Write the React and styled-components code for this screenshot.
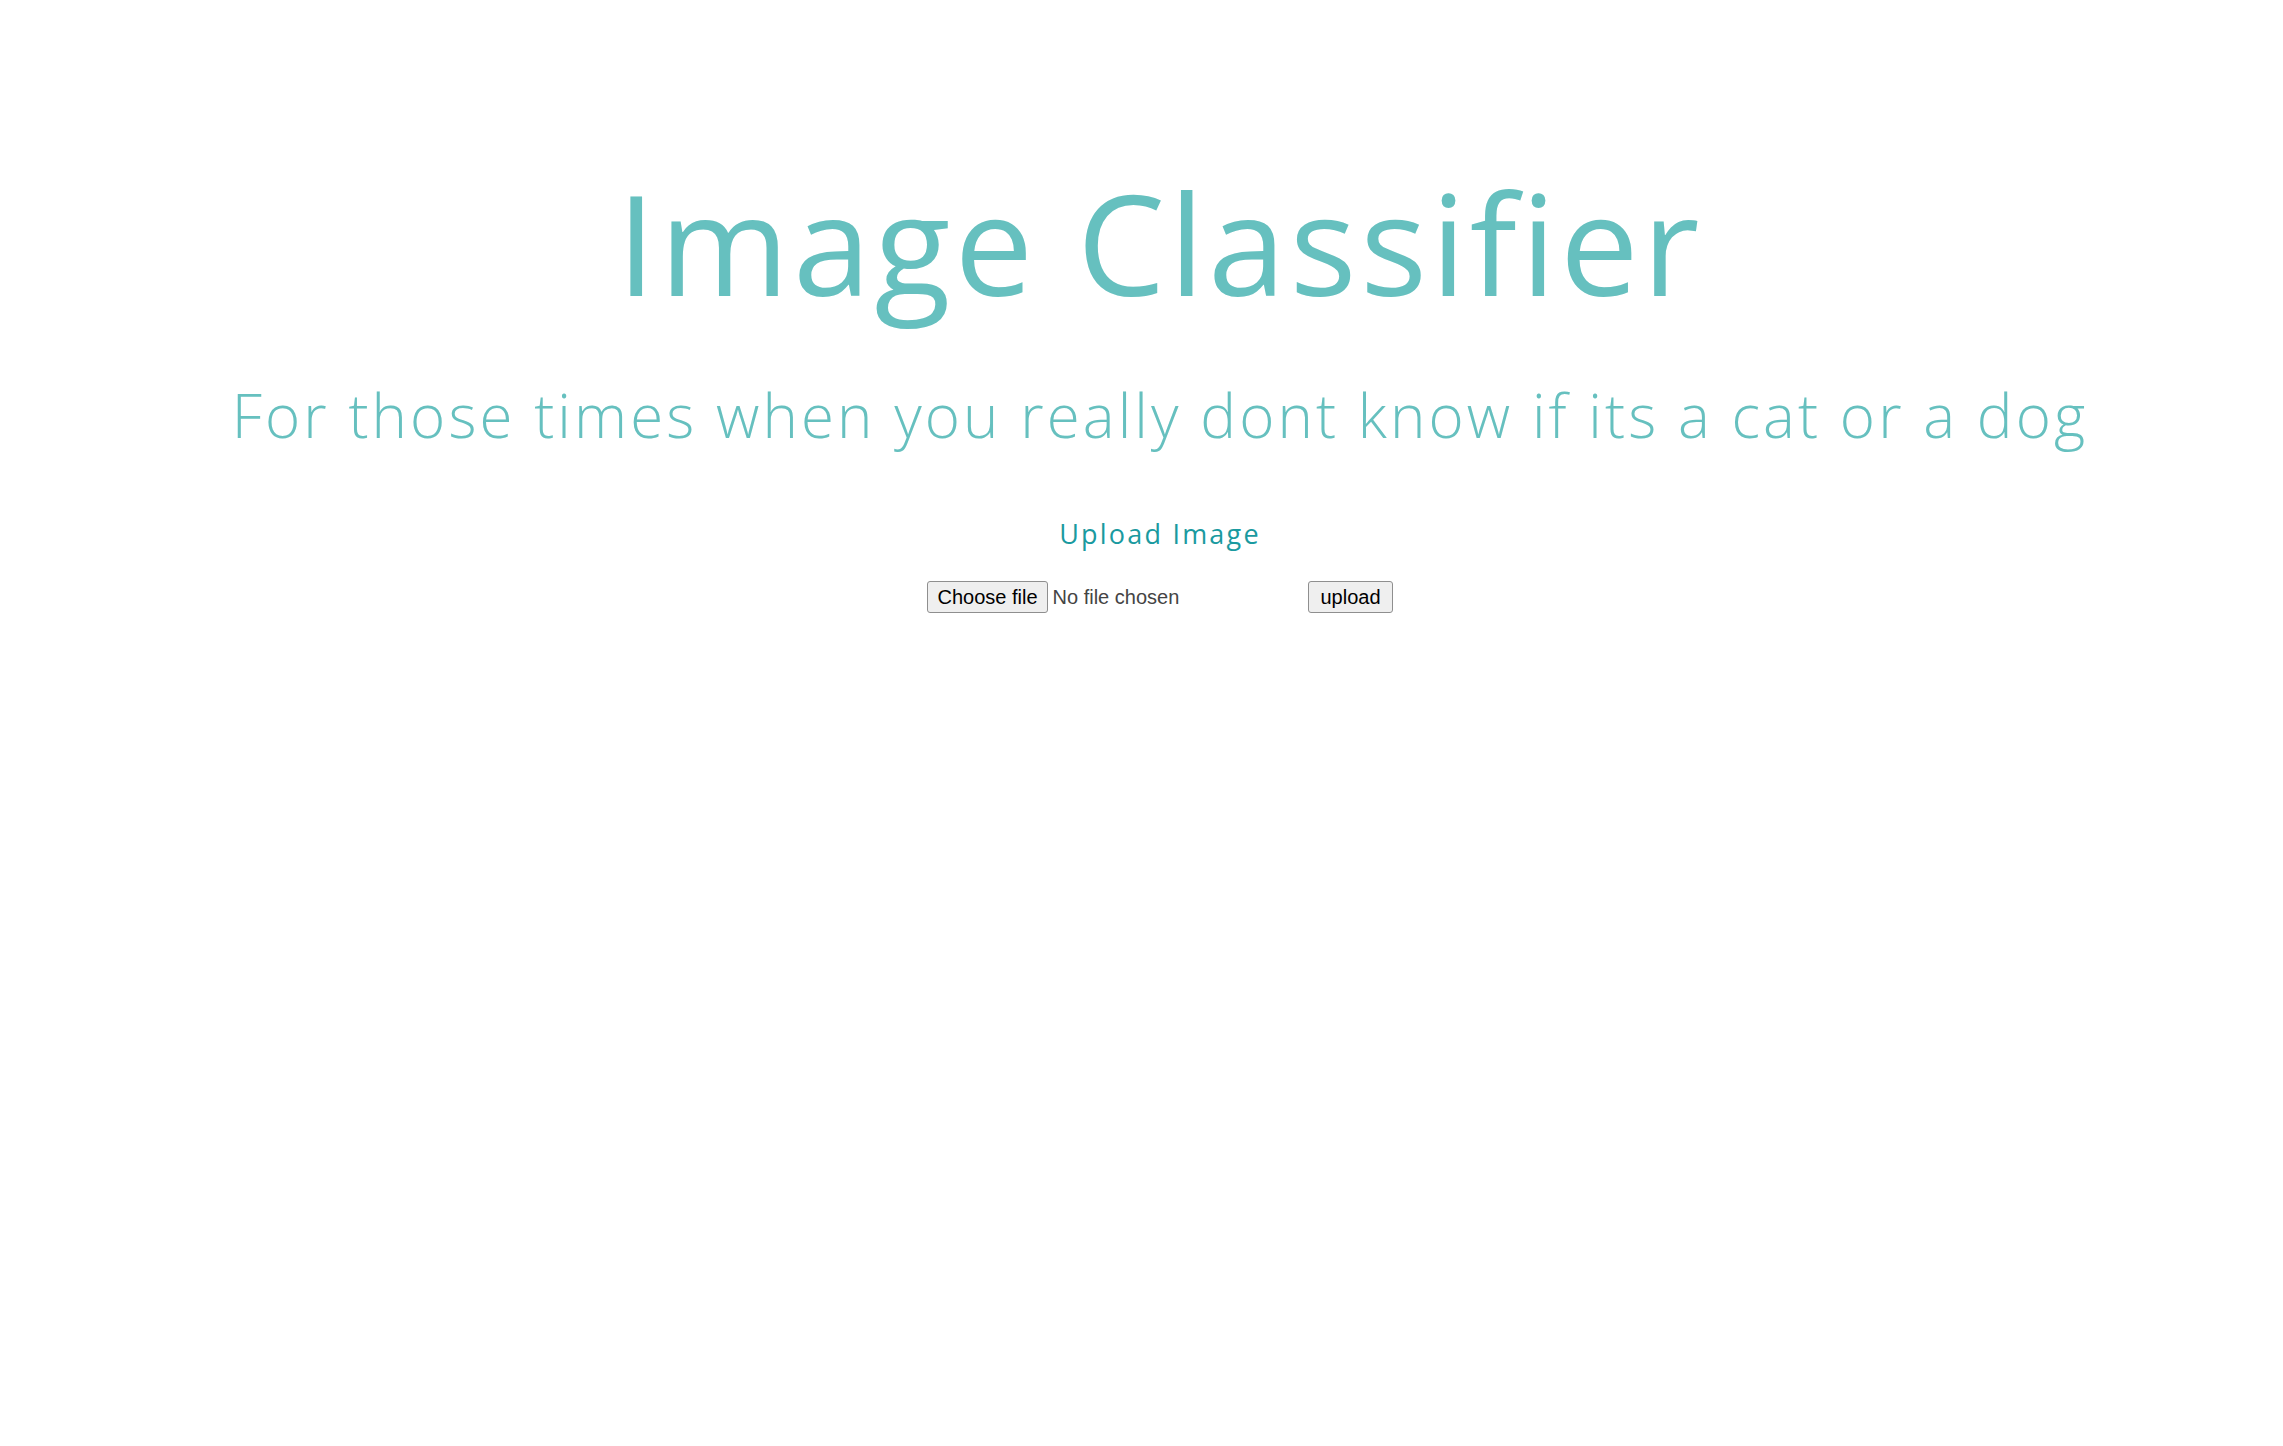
import React, { useState } from 'react'
import styled, { createGlobalStyle } from 'styled-components'

const GlobalStyle = createGlobalStyle`
  html, body {
    margin: 0;
    padding: 0;
    background: #ffffff;
  }
`

const Page = styled.main`
  display: flex;
  flex-direction: column;
  align-items: center;
  min-height: 1446px;
  box-sizing: border-box;
  padding: 172px 0 0 37px;
  font-family: 'Open Sans', sans-serif;
  text-align: center;
`

const Title = styled.h1`
  margin: 0;
  font-size: 140px;
  font-weight: 400;
  line-height: 1;
  letter-spacing: 3.8px;
  color: #66c0bf;
`

const Tagline = styled.h2`
  margin: 73px 0 0;
  font-size: 60px;
  font-weight: 300;
  line-height: 1;
  letter-spacing: 3.1px;
  color: #66c0bf;
`

const UploadForm = styled.form`
  display: flex;
  flex-direction: column;
  align-items: center;
  margin-top: 75px;
`

const UploadLabel = styled.h3`
  margin: 0;
  font-size: 27px;
  font-weight: 500;
  line-height: 1;
  letter-spacing: 2.2px;
  color: #1a9aa0;
`

const Controls = styled.div`
  display: flex;
  align-items: center;
  gap: 5px;
  margin-top: 34px;
`

const FilePicker = styled.label`
  display: flex;
  align-items: center;
  width: 376px;
  cursor: pointer;
`

const HiddenInput = styled.input`
  display: none;
`

const ControlButton = styled.span`
  display: inline-flex;
  align-items: center;
  box-sizing: border-box;
  height: 32px;
  padding: 0 ${({ $pad }) => $pad}px;
  font-family: 'Liberation Sans', Arial, sans-serif;
  font-size: 20px;
  color: #000000;
  background: #efefef;
  border: 1px solid #8f8f8f;
  border-radius: 3px;
`

const FileName = styled.span`
  margin-left: 5px;
  font-family: 'Liberation Sans', Arial, sans-serif;
  font-size: 20px;
  color: #444444;
  white-space: nowrap;
`

const UploadButton = styled.button`
  box-sizing: border-box;
  height: 32px;
  padding: 0 11px;
  font-family: 'Liberation Sans', Arial, sans-serif;
  font-size: 20px;
  color: #000000;
  background: #efefef;
  border: 1px solid #8f8f8f;
  border-radius: 3px;
`

export default function App() {
  const [file, setFile] = useState(null)

  return (
    <>
      <GlobalStyle />
      <Page>
        <Title>Image Classifier</Title>
        <Tagline>For those times when you really dont know if its a cat or a dog</Tagline>
        <UploadForm onSubmit={(e) => e.preventDefault()}>
          <UploadLabel>Upload Image</UploadLabel>
          <Controls>
            <FilePicker>
              <HiddenInput type="file" name="file" onChange={(e) => setFile(e.target.files[0] || null)} />
              <ControlButton $pad={9}>Choose file</ControlButton>
              <FileName>{file ? file.name : 'No file chosen'}</FileName>
            </FilePicker>
            <UploadButton type="submit">upload</UploadButton>
          </Controls>
        </UploadForm>
      </Page>
    </>
  )
}
